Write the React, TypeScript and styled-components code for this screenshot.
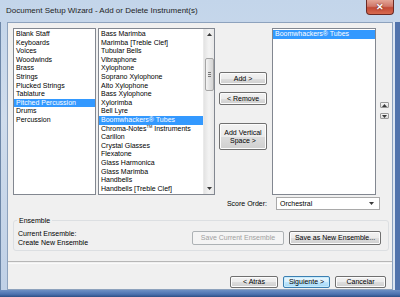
import styled, { createGlobalStyle } from 'styled-components'

const GlobalStyle = createGlobalStyle`
  html, body {
    margin: 0;
    padding: 0;
    background: #ffffff;
  }
  body {
    font-family: "Liberation Sans", Arial, sans-serif;
  }
`

const Window = styled.div`
  width: 400px;
  height: 297px;
  display: flex;
  flex-direction: column;
  background: linear-gradient(180deg, #c3d5ea 0%, #cfdcec 40%, #bfd0e6 100%);
  overflow: hidden;
`

const TitleBar = styled.div`
  height: 22px;
  display: flex;
  align-items: flex-start;
  justify-content: space-between;
  padding-left: 6px;
  box-sizing: border-box;
`

const Title = styled.span`
  font-size: 8px;
  line-height: 8px;
  margin-top: 7px;
  color: #1e1e1e;
`

const CloseButton = styled.div`
  width: 28px;
  height: 15px;
  margin-right: 6px;
  border: 1px solid #6b2a24;
  border-top: none;
  border-radius: 0 0 4px 4px;
  box-sizing: border-box;
  background: linear-gradient(180deg, #e4a596 0%, #d0786a 45%, #c24a36 55%, #d86b50 100%);
  color: #fff;
  font-size: 9px;
  font-weight: bold;
  display: flex;
  align-items: center;
  justify-content: center;
  text-shadow: 0 0 2px #5a1a10;
`

const Middle = styled.div`
  flex: 1;
  display: flex;
`

const FrameLeft = styled.div`
  width: 7px;
  border-left: 1px solid #6d87a8;
  box-sizing: border-box;
`

const FrameRight = styled.div`
  width: 7px;
  display: flex;
  box-sizing: border-box;
  border-left: 2px solid #dce6f2;
  background: #5073ac;
`

const FrameBottom = styled.div`
  height: 7px;
  background: linear-gradient(180deg, #6d8fc4 0%, #4d72b0 60%, #2d4f86 100%);
`

const Client = styled.div`
  flex: 1;
  background: #f0f0f0;
  border: 1px solid #8da2bd;
  box-sizing: border-box;
  display: flex;
  flex-direction: column;
  padding: 5px 0 0 5px;
  font-size: 7px;
  color: #000;
`

const TopRow = styled.div`
  display: flex;
  align-items: flex-start;
  height: 167px;
`

const ListBox = styled.div<{ $w: number; $ml?: number }>`
  width: ${p => p.$w}px;
  height: 167px;
  margin-left: ${p => p.$ml ?? 0}px;
  background: #fff;
  border: 1px solid #828790;
  box-sizing: border-box;
  display: flex;
  padding: 1px 0 0 0;
`

const Items = styled.div`
  flex: 1;
  display: flex;
  flex-direction: column;
`

const Item = styled.div<{ $sel?: boolean }>`
  height: 8.6px;
  line-height: 8.6px;
  padding-left: 2px;
  white-space: nowrap;
  background: ${p => (p.$sel ? '#3399ff' : 'transparent')};
  color: ${p => (p.$sel ? '#fff' : '#000')};
  sup {
    font-size: 4px;
    line-height: 0;
  }
`

const ScrollBar = styled.div`
  width: 11px;
  margin-top: -1px;
  height: 165px;
  background: linear-gradient(90deg, #e3e3e3 0%, #f3f3f3 50%, #e8e8e8 100%);
  border-left: 1px solid #eaeaea;
  display: flex;
  flex-direction: column;
  align-items: center;
  box-sizing: border-box;
`

const ScrollArrow = styled.div`
  height: 11px;
  width: 100%;
  display: flex;
  align-items: center;
  justify-content: center;
`

const Thumb = styled.div`
  margin-top: 18px;
  width: 9px;
  height: 33px;
  border: 1px solid #a5a5a5;
  border-radius: 2px;
  box-sizing: border-box;
  background: linear-gradient(90deg, #f4f4f4 0%, #e2e2e2 50%, #d4d4d4 100%);
  display: flex;
  flex-direction: column;
  align-items: center;
  justify-content: center;
  gap: 1px;
`

const Grip = styled.div`
  width: 3px;
  height: 1px;
  background: #777;
`

const Spacer = styled.div`
  flex: 1;
`

const ButtonColumn = styled.div`
  width: 48px;
  margin-left: 4px;
  display: flex;
  flex-direction: column;
  padding-top: 44px;
`

const Button = styled.div<{ $w?: number; $h?: number; $disabled?: boolean; $default?: boolean }>`
  width: ${p => (p.$w ? `${p.$w}px` : '100%')};
  height: ${p => p.$h ?? 13}px;
  box-sizing: border-box;
  border: 1px solid ${p => (p.$disabled ? '#adb2b5' : p.$default ? '#3c7fb1' : '#707070')};
  border-radius: 2px;
  background: ${p =>
    p.$disabled
      ? '#f4f4f4'
      : p.$default
        ? 'linear-gradient(180deg, #eaf6fd 0%, #d9f0fc 50%, #bee6fd 51%, #a7d9f5 100%)'
        : 'linear-gradient(180deg, #f2f2f2 0%, #ebebeb 50%, #dddddd 51%, #cfcfcf 100%)'};
  box-shadow: inset 0 0 0 1px ${p => (p.$disabled ? '#f4f4f4' : p.$default ? '#c8ecfd' : '#fcfcfc')};
  color: ${p => (p.$disabled ? '#a0a0a0' : '#000')};
  font-size: 7px;
  line-height: 8px;
  display: flex;
  align-items: center;
  justify-content: center;
  text-align: center;
  white-space: nowrap;
  flex-shrink: 0;
`

const ButtonGap = styled.div<{ $h: number }>`
  height: ${p => p.$h}px;
`

const OrderColumn = styled.div`
  width: 9px;
  margin-left: 4px;
  display: flex;
  flex-direction: column;
  gap: 5px;
  padding-top: 74px;
`

const MiniButton = styled.div`
  width: 9px;
  height: 6px;
  box-sizing: border-box;
  border: 1px solid #9a9a9a;
  border-radius: 1px;
  background: linear-gradient(180deg, #f6f6f6, #dcdcdc);
  display: flex;
  align-items: center;
  justify-content: center;
`

const ScoreRow = styled.div`
  display: flex;
  align-items: center;
  justify-content: flex-end;
  height: 13px;
  margin-top: 2px;
  padding-right: 12px;
  gap: 9px;
`

const Label = styled.span`
  font-size: 7px;
`

const Select = styled.div`
  width: 104px;
  height: 13px;
  box-sizing: border-box;
  background: #fff;
  border: 1px solid #a9a9a9;
  display: flex;
  align-items: center;
  justify-content: space-between;
  padding: 0 5px 0 3px;
  font-size: 7px;
`

const GroupBox = styled.div`
  margin: 10px 0 0 0;
  width: 376px;
  height: 31px;
  box-sizing: border-box;
  border: 1px solid #dcdfe2;
  border-radius: 3px;
  position: relative;
  display: flex;
  align-items: flex-start;
  justify-content: space-between;
  padding: 10px 7px 0 4px;
`

const Legend = styled.span`
  position: absolute;
  top: -5px;
  left: 3px;
  padding: 0 2px;
  background: #f0f0f0;
  font-size: 7px;
  line-height: 9px;
`

const CurrentText = styled.div`
  font-size: 7px;
  line-height: 8.5px;
  margin-top: -1px;
`

const GroupButtons = styled.div`
  display: flex;
  gap: 5px;
`

const Separator = styled.div`
  margin: 10px 0 0 -5px;
  height: 1px;
  border-top: 1px solid #a0a0a0;
  border-bottom: 1px solid #ffffff;
  opacity: 0.7;
`

const BottomRow = styled.div`
  display: flex;
  justify-content: flex-end;
  gap: 5px;
  margin-top: 12px;
  padding-right: 6px;
`

const categories = [
  'Blank Staff',
  'Keyboards',
  'Voices',
  'Woodwinds',
  'Brass',
  'Strings',
  'Plucked Strings',
  'Tablature',
  'Pitched Percussion',
  'Drums',
  'Percussion',
]

const instruments = [
  'Bass Marimba',
  'Marimba [Treble Clef]',
  'Tubular Bells',
  'Vibraphone',
  'Xylophone',
  'Soprano Xylophone',
  'Alto Xylophone',
  'Bass Xylophone',
  'Xylorimba',
  'Bell Lyre',
  'Boomwhackers® Tubes',
  'Chroma-Notes™ Instruments',
  'Carillon',
  'Crystal Glasses',
  'Flexatone',
  'Glass Harmonica',
  'Glass Marimba',
  'Handbells',
  'Handbells [Treble Clef]',
]

function Arrow({ up }: { up?: boolean }) {
  return (
    <svg width="5" height="3" viewBox="0 0 5 3">
      <path d={up ? 'M0 3 L2.5 0 L5 3 Z' : 'M0 0 L2.5 3 L5 0 Z'} fill="#3a3a3a" />
    </svg>
  )
}

export default function App() {
  return (
    <>
      <GlobalStyle />
      <Window>
        <TitleBar>
          <Title>Document Setup Wizard - Add or Delete Instrument(s)</Title>
          <CloseButton>✕</CloseButton>
        </TitleBar>
        <Middle>
          <FrameLeft />
          <Client>
            <TopRow>
              <ListBox $w={83}>
                <Items>
                  {categories.map(c => (
                    <Item key={c} $sel={c === 'Pitched Percussion'}>{c}</Item>
                  ))}
                </Items>
              </ListBox>
              <ListBox $w={117} $ml={2}>
                <Items>
                  {instruments.map(i => (
                    <Item key={i} $sel={i === 'Boomwhackers® Tubes'}>
                      {i === 'Chroma-Notes™ Instruments' ? (
                        <>Chroma-Notes<sup>TM</sup> Instruments</>
                      ) : (
                        i
                      )}
                    </Item>
                  ))}
                </Items>
                <ScrollBar>
                  <ScrollArrow><Arrow up /></ScrollArrow>
                  <Thumb>
                    <Grip />
                    <Grip />
                    <Grip />
                  </Thumb>
                  <Spacer />
                  <ScrollArrow><Arrow /></ScrollArrow>
                </ScrollBar>
              </ListBox>
              <ButtonColumn>
                <Button>Add &gt;</Button>
                <ButtonGap $h={7} />
                <Button>&lt; Remove</Button>
                <ButtonGap $h={18} />
                <Button $h={27}>
                  Add Vertical
                  <br />
                  Space &gt;
                </Button>
              </ButtonColumn>
              <ListBox $w={104} $ml={5}>
                <Items>
                  <Item $sel>Boomwhackers® Tubes</Item>
                </Items>
              </ListBox>
              <OrderColumn>
                <MiniButton><Arrow up /></MiniButton>
                <MiniButton><Arrow /></MiniButton>
              </OrderColumn>
            </TopRow>
            <ScoreRow>
              <Label>Score Order:</Label>
              <Select>
                <span>Orchestral</span>
                <Arrow />
              </Select>
            </ScoreRow>
            <GroupBox>
              <Legend>Ensemble</Legend>
              <CurrentText>
                Current Ensemble:
                <br />
                Create New Ensemble
              </CurrentText>
              <GroupButtons>
                <Button $w={92} $h={14} $disabled>Save Current Ensemble</Button>
                <Button $w={92} $h={14}>Save as New Ensemble...</Button>
              </GroupButtons>
            </GroupBox>
            <Separator />
            <BottomRow>
              <Button $w={48} $h={12}>&lt; Atrás</Button>
              <Button $w={47} $h={12} $default>Siguiente &gt;</Button>
              <Button $w={51} $h={12}>Cancelar</Button>
            </BottomRow>
          </Client>
          <FrameRight />
        </Middle>
        <FrameBottom />
      </Window>
    </>
  )
}
